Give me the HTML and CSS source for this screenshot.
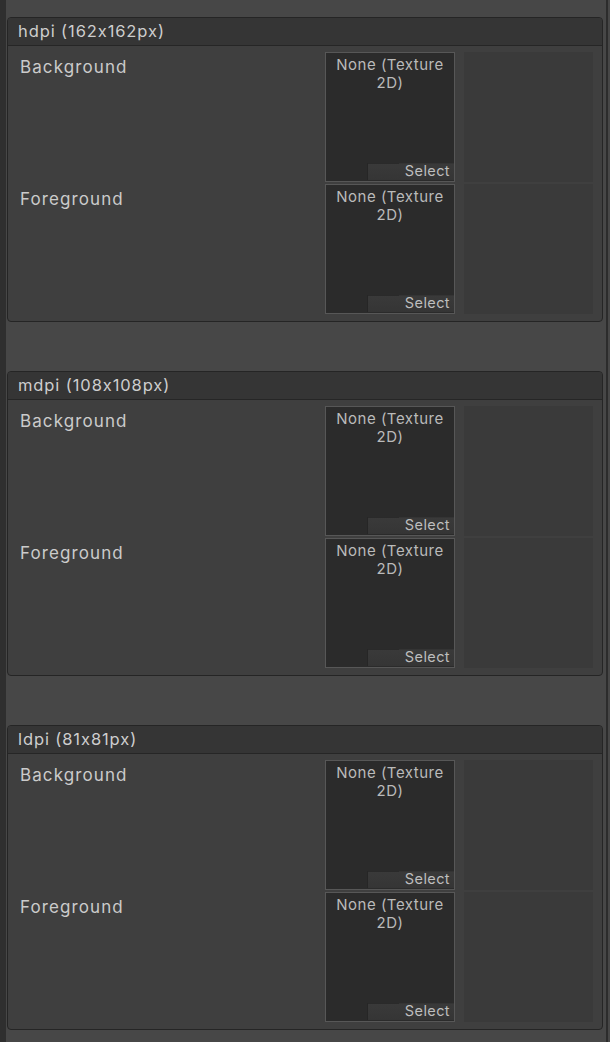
FILE: index.html
```html
<!DOCTYPE html>
<html>
<head>
<meta charset="utf-8">
<link rel="stylesheet" href="styles.css">
</head>
<body>
<div class="page">
  <section class="panel">
    <div class="panel-head">hdpi (162x162px)</div>
    <div class="panel-body">
      <div class="row">
        <div class="label">Background</div>
        <div class="field"><div class="field-text">None (Texture 2D)</div><div class="select">Select</div></div>
        <div class="preview"></div>
      </div>
      <div class="row">
        <div class="label">Foreground</div>
        <div class="field"><div class="field-text">None (Texture 2D)</div><div class="select">Select</div></div>
        <div class="preview"></div>
      </div>
    </div>
  </section>
  <section class="panel">
    <div class="panel-head">mdpi (108x108px)</div>
    <div class="panel-body">
      <div class="row">
        <div class="label">Background</div>
        <div class="field"><div class="field-text">None (Texture 2D)</div><div class="select">Select</div></div>
        <div class="preview"></div>
      </div>
      <div class="row">
        <div class="label">Foreground</div>
        <div class="field"><div class="field-text">None (Texture 2D)</div><div class="select">Select</div></div>
        <div class="preview"></div>
      </div>
    </div>
  </section>
  <section class="panel">
    <div class="panel-head">ldpi (81x81px)</div>
    <div class="panel-body">
      <div class="row">
        <div class="label">Background</div>
        <div class="field"><div class="field-text">None (Texture 2D)</div><div class="select">Select</div></div>
        <div class="preview"></div>
      </div>
      <div class="row">
        <div class="label">Foreground</div>
        <div class="field"><div class="field-text">None (Texture 2D)</div><div class="select">Select</div></div>
        <div class="preview"></div>
      </div>
    </div>
  </section>
</div>
</body>
</html>
```
FILE: styles.css
```css
html, body {
  margin: 0;
  padding: 0;
  background: #474747;
}
body {
  width: 610px;
  height: 1042px;
  overflow: hidden;
  font-family: Inter, "Noto Sans", sans-serif;
  font-feature-settings: "calt" 0;
  color: #c4c4c4;
}
.page {
  box-sizing: border-box;
  height: 1042px;
  border-left: 6px solid #2f2f2f;
  border-right: 2px solid #2c2c2c;
  margin-right: 2px;
  padding: 17px 3px 0 1px;
  display: flex;
  flex-direction: column;
  gap: 49px;
}
.panel {
  border: 1px solid #252525;
  border-radius: 4px;
  background: #3f3f3f;
  overflow: hidden;
}
.panel-head {
  height: 28px;
  box-sizing: border-box;
  background: #353535;
  border-bottom: 1px solid #262626;
  padding: 3px 0 0 10px;
  font-size: 16.5px;
  line-height: 21px;
  color: #cecece;
  letter-spacing: 0.9px;
}
.panel-body {
  padding: 6px 9px 7px 12px;
  display: flex;
  flex-direction: column;
  gap: 2px;
}
.row {
  display: flex;
  height: 130px;
}
.label {
  flex: 1;
  font-size: 17px;
  line-height: 20px;
  padding-top: 5px;
  color: #cbcbcb;
  letter-spacing: 1.1px;
}
.field {
  width: 128px;
  height: 128px;
  background: #2b2b2b;
  border: 1px solid #575757;
  display: flex;
  flex-direction: column;
  justify-content: space-between;
}
.field-text {
  text-align: center;
  font-size: 15px;
  line-height: 18px;
  padding: 3px 4px 0;
  color: #bababa;
  letter-spacing: 0.5px;
}
.select {
  align-self: flex-end;
  width: 87px;
  height: 17px;
  margin: 0 0 1px 0;
  box-sizing: border-box;
  background: linear-gradient(90deg, #2a2a2a 0 31px, #343434 31px) top / 100% 1px no-repeat, linear-gradient(#3a3a3a, #353535);
  border-left: 1px solid #262626;
  text-align: right;
  padding-right: 4px;
  font-size: 14.5px;
  line-height: 16px;
  color: #bebebe;
  letter-spacing: 0.4px;
}
.preview {
  width: 129px;
  height: 130px;
  margin-left: 9px;
  background: #3a3a3a;
}
```
